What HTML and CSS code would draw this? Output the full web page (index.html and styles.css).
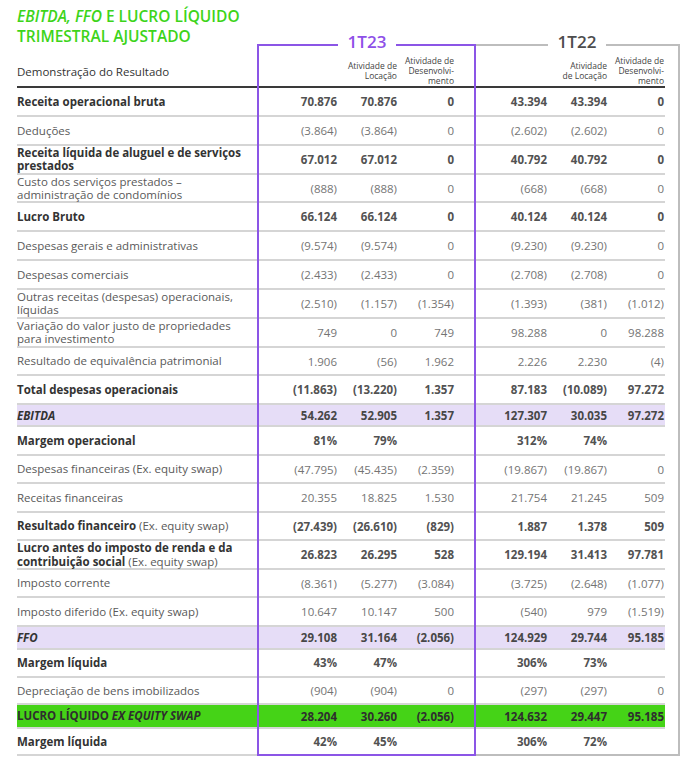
FILE: index.html
```html
<!DOCTYPE html>
<html lang="pt-BR">
<head>
<meta charset="utf-8">
<title>EBITDA, FFO e Lucro Líquido Trimestral Ajustado</title>
<link rel="stylesheet" href="styles.css">
</head>
<body>
<div class="page">
  <h1 class="title"><em>EBITDA, FFO</em> E LUCRO LÍQUIDO<br>TRIMESTRAL AJUSTADO</h1>
  <div class="table">
    <div class="row head">
      <div class="lbl">Demonstração do Resultado</div>
      <div class="sub"></div>
      <div class="sub">Atividade de<br>Locação</div>
      <div class="sub">Atividade de<br>Desenvolvi-<br>mento</div>
      <div class="sub"></div>
      <div class="sub">Atividade<br>de Locação</div>
      <div class="sub last">Atividade de<br>Desenvolvi-<br>mento</div>
    </div>
    <div class="row b"><div class="lbl">Receita operacional bruta</div><div class="num">70.876</div><div class="num">70.876</div><div class="num">0</div><div class="num">43.394</div><div class="num">43.394</div><div class="num">0</div></div>
    <div class="row"><div class="lbl">Deduções</div><div class="num">(3.864)</div><div class="num">(3.864)</div><div class="num">0</div><div class="num">(2.602)</div><div class="num">(2.602)</div><div class="num">0</div></div>
    <div class="row b"><div class="lbl">Receita líquida de aluguel e de serviços<br>prestados</div><div class="num">67.012</div><div class="num">67.012</div><div class="num">0</div><div class="num">40.792</div><div class="num">40.792</div><div class="num">0</div></div>
    <div class="row"><div class="lbl">Custo dos serviços prestados –<br>administração de condomínios</div><div class="num">(888)</div><div class="num">(888)</div><div class="num">0</div><div class="num">(668)</div><div class="num">(668)</div><div class="num">0</div></div>
    <div class="row b"><div class="lbl">Lucro Bruto</div><div class="num">66.124</div><div class="num">66.124</div><div class="num">0</div><div class="num">40.124</div><div class="num">40.124</div><div class="num">0</div></div>
    <div class="row"><div class="lbl">Despesas gerais e administrativas</div><div class="num">(9.574)</div><div class="num">(9.574)</div><div class="num">0</div><div class="num">(9.230)</div><div class="num">(9.230)</div><div class="num">0</div></div>
    <div class="row"><div class="lbl">Despesas comerciais</div><div class="num">(2.433)</div><div class="num">(2.433)</div><div class="num">0</div><div class="num">(2.708)</div><div class="num">(2.708)</div><div class="num">0</div></div>
    <div class="row"><div class="lbl">Outras receitas (despesas) operacionais,<br>líquidas</div><div class="num">(2.510)</div><div class="num">(1.157)</div><div class="num">(1.354)</div><div class="num">(1.393)</div><div class="num">(381)</div><div class="num">(1.012)</div></div>
    <div class="row"><div class="lbl">Variação do valor justo de propriedades<br>para investimento</div><div class="num">749</div><div class="num">0</div><div class="num">749</div><div class="num">98.288</div><div class="num">0</div><div class="num">98.288</div></div>
    <div class="row"><div class="lbl">Resultado de equivalência patrimonial</div><div class="num">1.906</div><div class="num">(56)</div><div class="num">1.962</div><div class="num">2.226</div><div class="num">2.230</div><div class="num">(4)</div></div>
    <div class="row b"><div class="lbl">Total despesas operacionais</div><div class="num">(11.863)</div><div class="num">(13.220)</div><div class="num">1.357</div><div class="num">87.183</div><div class="num">(10.089)</div><div class="num">97.272</div></div>
    <div class="row b hl"><div class="lbl"><em>EBITDA</em></div><div class="num">54.262</div><div class="num">52.905</div><div class="num">1.357</div><div class="num">127.307</div><div class="num">30.035</div><div class="num">97.272</div></div>
    <div class="row b mid"><div class="lbl">Margem operacional</div><div class="num">81%</div><div class="num">79%</div><div class="num"></div><div class="num">312%</div><div class="num">74%</div><div class="num"></div></div>
    <div class="row mid"><div class="lbl">Despesas financeiras (Ex. equity swap)</div><div class="num">(47.795)</div><div class="num">(45.435)</div><div class="num">(2.359)</div><div class="num">(19.867)</div><div class="num">(19.867)</div><div class="num">0</div></div>
    <div class="row mid"><div class="lbl">Receitas financeiras</div><div class="num">20.355</div><div class="num">18.825</div><div class="num">1.530</div><div class="num">21.754</div><div class="num">21.245</div><div class="num">509</div></div>
    <div class="row b mix mid"><div class="lbl"><strong>Resultado financeiro</strong> (Ex. equity swap)</div><div class="num">(27.439)</div><div class="num">(26.610)</div><div class="num">(829)</div><div class="num">1.887</div><div class="num">1.378</div><div class="num">509</div></div>
    <div class="row b mix mid"><div class="lbl"><strong>Lucro antes do imposto de renda e da<br>contribuição social</strong> (Ex. equity swap)</div><div class="num">26.823</div><div class="num">26.295</div><div class="num">528</div><div class="num">129.194</div><div class="num">31.413</div><div class="num">97.781</div></div>
    <div class="row mid"><div class="lbl">Imposto corrente</div><div class="num">(8.361)</div><div class="num">(5.277)</div><div class="num">(3.084)</div><div class="num">(3.725)</div><div class="num">(2.648)</div><div class="num">(1.077)</div></div>
    <div class="row mid"><div class="lbl">Imposto diferido (Ex. equity swap)</div><div class="num">10.647</div><div class="num">10.147</div><div class="num">500</div><div class="num">(540)</div><div class="num">979</div><div class="num">(1.519)</div></div>
    <div class="row b hl ffo"><div class="lbl"><em>FFO</em></div><div class="num">29.108</div><div class="num">31.164</div><div class="num">(2.056)</div><div class="num">124.929</div><div class="num">29.744</div><div class="num">95.185</div></div>
    <div class="row b short"><div class="lbl">Margem líquida</div><div class="num">43%</div><div class="num">47%</div><div class="num"></div><div class="num">306%</div><div class="num">73%</div><div class="num"></div></div>
    <div class="row short"><div class="lbl">Depreciação de bens imobilizados</div><div class="num">(904)</div><div class="num">(904)</div><div class="num">0</div><div class="num">(297)</div><div class="num">(297)</div><div class="num">0</div></div>
    <div class="row b gr"><div class="lbl">LUCRO LÍQUIDO <em>EX EQUITY SWAP</em></div><div class="num">28.204</div><div class="num">30.260</div><div class="num">(2.056)</div><div class="num">124.632</div><div class="num">29.447</div><div class="num">95.185</div></div>
    <div class="row b last-row"><div class="lbl">Margem líquida</div><div class="num">42%</div><div class="num">45%</div><div class="num"></div><div class="num">306%</div><div class="num">72%</div><div class="num"></div></div>
  </div>
  <div class="period p23"><span>1T23</span></div>
  <div class="period p22"><span>1T22</span></div>
</div>
</body>
</html>
```

FILE: styles.css
```css
html, body {
  margin: 0;
  background: #ffffff;
}

body {
  font-family: "Open Sans", "Noto Sans", sans-serif;
}

.page {
  position: relative;
  width: 692px;
  height: 762px;
  padding: 6px 0 0 17px;
  box-sizing: border-box;
  overflow: hidden;
}

.title {
  margin: 0 0 10px;
  height: 40px;
  font-size: 15.5px;
  line-height: 20px;
  font-weight: 600;
  color: #3dd41a;
}

.title em {
  font-style: italic;
}

.table {
  width: 648px;
}

.row {
  display: grid;
  grid-template-columns: 241px 79px 60px 57px 93px 60px 58px;
  align-items: center;
  height: 28.85px;
  box-sizing: border-box;
  border-bottom: 2px solid #d5d5d5;
  font-size: 11.5px;
}

.row.mid {
  height: 28.5px;
}

.row.short {
  height: 27.8px;
}

.row.last-row {
  height: 27.5px;
}

.row.head {
  height: 32px;
  border-bottom: 2px solid #3a3a3a;
}

.lbl {
  color: #595959;
  line-height: 13.5px;
}

.head .lbl {
  color: #333333;
  padding-top: 1px;
}

.sub {
  font-size: 8.5px;
  line-height: 10px;
  color: #444444;
  text-align: right;
}

.num {
  text-align: right;
  color: #747474;
  white-space: nowrap;
}

.num:last-child,
.sub.last {
  padding-right: 1px;
}

.b .lbl {
  font-weight: 700;
  color: #333333;
}

.b.mix .lbl {
  font-weight: 400;
  color: #595959;
}

.b.mix .lbl strong {
  font-weight: 700;
  color: #333333;
}

.b .num {
  font-weight: 700;
  color: #525252;
}

.lbl em {
  font-style: italic;
}

.hl {
  background: #e6ddf7;
  height: 22px;
}

.hl.ffo {
  height: 23px;
}

.gr {
  background: #45d317;
  height: 23.5px;
}

.gr .lbl,
.gr .num {
  color: #2e2e2e;
}

.hl .num {
  color: #474747;
}

.period {
  position: absolute;
  top: 44px;
  height: 712px;
  box-sizing: border-box;
}

.p23 {
  left: 257px;
  width: 219px;
  border: 2px solid #8b55e6;
}

.p22 {
  left: 476px;
  width: 204px;
  border: 2px solid #bdbdbd;
  border-left: 0;
}

.period span {
  position: absolute;
  top: -14.5px;
  width: 58px;
  background: #ffffff;
  text-align: center;
  font-size: 17px;
  line-height: 20px;
  font-weight: 600;
}

.p23 span {
  left: 79px;
  color: #8e50e8;
}

.p22 span {
  left: 72px;
  color: #4d4d4d;
}
```
